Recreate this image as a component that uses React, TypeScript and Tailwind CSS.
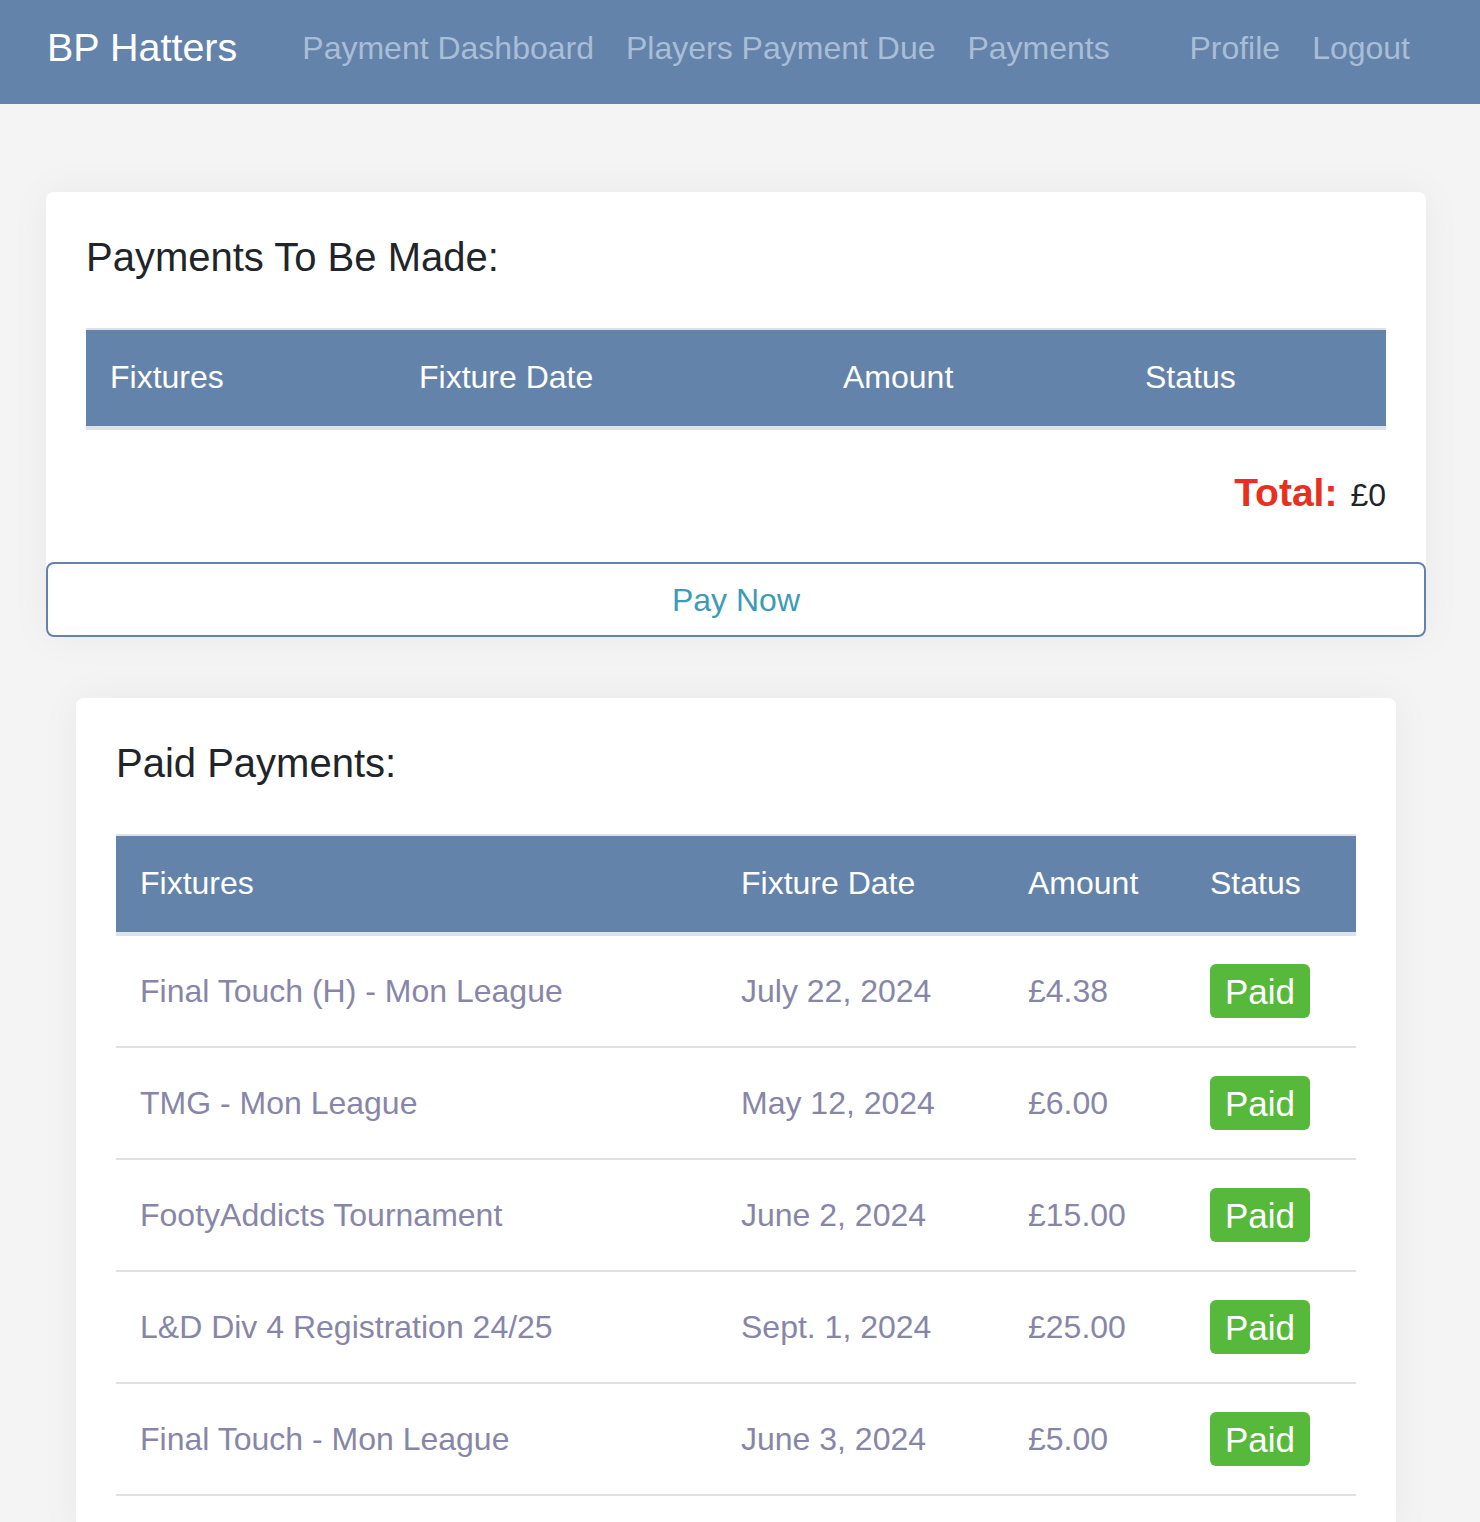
const NAV_LEFT = ["Payment Dashboard", "Players Payment Due", "Payments"];
const NAV_RIGHT = ["Profile", "Logout"];

const PAID = [
  { fixture: "Final Touch (H) - Mon League", date: "July 22, 2024", amount: "£4.38" },
  { fixture: "TMG - Mon League", date: "May 12, 2024", amount: "£6.00" },
  { fixture: "FootyAddicts Tournament", date: "June 2, 2024", amount: "£15.00" },
  { fixture: "L&D Div 4 Registration 24/25", date: "Sept. 1, 2024", amount: "£25.00" },
  { fixture: "Final Touch - Mon League", date: "June 3, 2024", amount: "£5.00" },
];

const HEAD = ["Fixtures", "Fixture Date", "Amount", "Status"];

/* Table header bar */
function TableHead({ cols }: { cols: string }) {
  return (
    <div className={`grid ${cols} border-t-2 border-b-4 border-[#dee2e6] bg-[#6483aa]`}>
      {HEAD.map(h => (
        <div key={h} className="pl-6 pt-[23px] pb-[25px] text-[32px] leading-[48px] text-white">
          {h}
        </div>
      ))}
    </div>
  );
}

export default function App() {
  return (
    <div className="min-h-screen bg-[#f4f4f5] pb-10 font-['Liberation_Sans',Arial,sans-serif] text-[#212529]">
      {/* ── Navbar ── */}
      <nav className="flex h-[104px] items-center bg-[#6483aa] pb-[8px] pl-[47px] pr-[54px]">
        <span className="mr-[49px] text-[39.5px] leading-[1.5] text-white">BP Hatters</span>
        <div className="flex">
          {NAV_LEFT.map(l => (
            <a key={l} className="px-4 text-[32px] leading-[48px] text-[#aabdd6]">{l}</a>
          ))}
        </div>
        <div className="ml-auto flex">
          {NAV_RIGHT.map(l => (
            <a key={l} className="px-4 text-[32px] leading-[48px] text-[#aabdd6]">{l}</a>
          ))}
        </div>
      </nav>

      {/* ── Payments to be made ── */}
      <div className="ml-[46px] mt-[88px] w-[1380px] rounded-lg bg-white shadow-[0_0_40px_rgba(0,0,0,0.05)]">
        <div className="px-10 pt-[41px] pb-[41px]">
          <h3 className="text-[40px] leading-[1.2]">Payments To Be Made:</h3>
          <div className="mt-[47px]">
            <TableHead cols="grid-cols-[309px_424px_302px_265px]" />
          </div>
          <div className="mt-[34px] flex items-baseline justify-end">
            <span className="text-[39px] font-bold leading-[57px] text-[#e8301f]">Total:</span>
            <span className="ml-[13px] text-[32px] leading-[40px]">£0</span>
          </div>
        </div>
        <button className="flex h-[75px] w-full items-center justify-center rounded-lg border-2 border-[#6483aa] bg-white text-[32px] text-[#3e9bb6]">
          Pay Now
        </button>
      </div>

      {/* ── Paid payments ── */}
      <div className="ml-[76px] mt-[61px] w-[1320px] rounded-lg bg-white px-10 pt-[41px] pb-10 shadow-[0_0_40px_rgba(0,0,0,0.05)]">
        <h3 className="text-[40px] leading-[1.2]">Paid Payments:</h3>
        <div className="mt-[47px]">
          <TableHead cols="grid-cols-[601px_287px_182px_170px]" />
          {PAID.map(p => (
            <div
              key={p.fixture}
              className="grid h-[112px] grid-cols-[601px_287px_182px_170px] items-center border-b-2 border-[#dee2e6] text-[32px] text-[#8886a8]"
            >
              <div className="pl-6">{p.fixture}</div>
              <div className="pl-6">{p.date}</div>
              <div className="pl-6">{p.amount}</div>
              <div className="pl-6">
                <span className="inline-flex h-[54px] items-center rounded-md bg-[#57b93b] px-[15px] text-[35px] leading-none text-white">
                  Paid
                </span>
              </div>
            </div>
          ))}
        </div>
      </div>
    </div>
  );
}
